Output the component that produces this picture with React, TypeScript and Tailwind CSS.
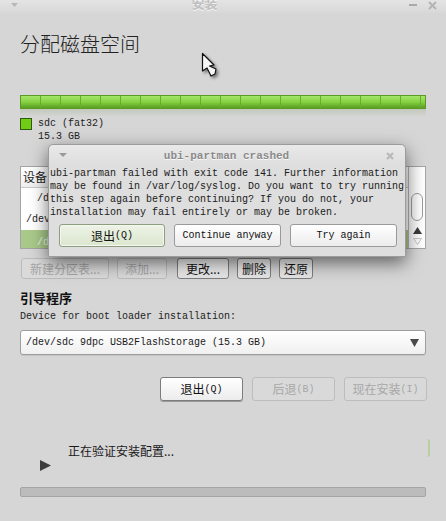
import React from "react";

const segs = Array.from({ length: 21 });

function Zh({ children, className = "" }: { children: React.ReactNode; className?: string }) {
  return <span className={"font-['Noto_Sans_CJK_SC',sans-serif] text-[12px] " + className}>{children}</span>;
}

export default function App() {
  return (
    <div className="relative w-[446px] h-[521px] overflow-hidden bg-[#d6d6d6] font-['Liberation_Mono','Noto_Sans_CJK_SC',monospace] text-[#1c1c1c]">
      {/* title bar */}
      <div className="flex h-[13px] items-start overflow-hidden bg-gradient-to-b from-[#e4e4e4] to-[#d8d8d8]">
        <svg width="7" height="4" viewBox="0 0 7 4" className="ml-[11px] mt-[3px]">
          <path d="M0 0 L7 0 L3.5 4 Z" fill="#b8b8b8" />
        </svg>
        <div className="flex-1 flex justify-center pr-[18px]">
          <span className="-mt-[5px] font-['Noto_Sans_CJK_SC',sans-serif] text-[13px] leading-[16px] font-bold text-[#c0c0c0] [text-shadow:0_1px_0_#f4f4f4]">安装</span>
        </div>
        <div className="flex items-start gap-[11px] mr-[9px] mt-[1px]">
          <div className="mt-[3px] w-[8px] h-[2px] bg-[#aaaaaa]" />
          <svg width="9" height="9" viewBox="0 0 9 9">
            <path d="M1 1 L8 8 M8 1 L1 8" stroke="#b4b4b4" strokeWidth="2" />
          </svg>
        </div>
      </div>

      {/* heading */}
      <div className="mt-[18px] px-[20px] font-['Noto_Sans_CJK_SC',sans-serif] text-[20px] leading-[26px] font-light text-[#222]">分配磁盘空间</div>

      {/* usage bar */}
      <div className="mt-[38px] mx-[20px] h-[14px] flex overflow-hidden border border-[#5c9a26] bg-gradient-to-b from-[#a6e66a] via-[#86d142] to-[#5a9f22]">
        {segs.map((_, i) => (
          <div key={i} className="w-[20px] shrink-0 h-full border-r border-[#6aac30]" />
        ))}
      </div>
      <div className="mx-[20px] h-[8px] bg-gradient-to-b from-[#c2c9bb] to-[#d6d6d6]" />

      {/* legend */}
      <div className="mt-[1px] px-[20px] flex gap-[6px]">
        <div className="w-[12px] h-[12px] border border-[#2f5a10] bg-[#70cc14]" />
        <div className="text-[10px] leading-[12px] text-[#222]">
          <div>sdc (fat32)</div>
          <div className="mt-[1px]">15.3 GB</div>
        </div>
      </div>

      {/* table */}
      <div className="mt-[23px] mx-[20px] h-[83px] flex border border-[#a4a4a4] bg-white overflow-hidden">
        <div className="flex-1 flex flex-col">
          <div className="h-[21px] shrink-0 flex items-center px-[2px] border-b border-[#c8c8c8] bg-gradient-to-b from-white to-[#efefef]">
            <Zh>设备</Zh>
          </div>
          <div className="h-[21px] shrink-0 flex items-center pl-[16px] text-[10px]"><span className="w-[12px] overflow-hidden whitespace-nowrap">/d</span></div>
          <div className="h-[21px] shrink-0 flex items-center pl-[5px] text-[10px]"><span className="w-[24px] overflow-hidden whitespace-nowrap">/dev</span></div>
          <div className="h-[21px] shrink-0 flex items-end pb-[1px] pl-[16px] text-[10px] text-[#eef6e6] bg-[#a9c98a]"><span className="w-[12px] overflow-hidden whitespace-nowrap">/d</span></div>
        </div>
        <div className="w-[17px] border-l border-[#b4b4b4] bg-gradient-to-r from-[#f4f4f4] to-white flex flex-col items-center">
          <div className="mt-[26px] w-[12px] h-[28px] rounded-[6px] border border-[#9a9a9a] bg-gradient-to-r from-[#f2f2f2] to-white" />
          <svg width="9" height="7" viewBox="0 0 9 7" className="mt-[6px]">
            <path d="M4.5 0 L9 7 L0 7 Z" fill="#3a3a3a" />
          </svg>
          <svg width="9" height="7" viewBox="0 0 9 7" className="mt-[4px]">
            <path d="M0.5 0.5 L8.5 0.5 L4.5 6.5 Z" fill="none" stroke="#c4c4c4" />
          </svg>
        </div>
      </div>

      {/* action row */}
      <div className="mt-[9px] pl-[21px] flex h-[21px]">
        <div className="w-[88px] flex items-center justify-center rounded-[3px] border border-[#bcbcbc] bg-[#dadada] text-[#a6a6a6]"><Zh>新建分区表...</Zh></div>
        <div className="ml-[8px] w-[50px] flex items-center justify-center rounded-[3px] border border-[#bcbcbc] bg-[#dadada] text-[#a6a6a6]"><Zh>添加...</Zh></div>
        <div className="ml-[10px] w-[52px] flex items-center justify-center rounded-[3px] border border-[#7e7e7e] bg-gradient-to-b from-[#f8f8f8] to-[#e4e4e4] text-[#111]"><Zh>更改...</Zh></div>
        <div className="ml-[8px] w-[34px] flex items-center justify-center rounded-[3px] border border-[#7e7e7e] bg-gradient-to-b from-[#f8f8f8] to-[#e4e4e4] text-[#111]"><Zh>删除</Zh></div>
        <div className="ml-[8px] w-[34px] flex items-center justify-center rounded-[3px] border border-[#7e7e7e] bg-gradient-to-b from-[#f8f8f8] to-[#e4e4e4] text-[#111]"><Zh>还原</Zh></div>
      </div>

      {/* boot loader */}
      <div className="mt-[10px] px-[20px] font-['Noto_Sans_CJK_SC',sans-serif] text-[13px] leading-[18px] font-bold text-[#111]">引导程序</div>
      <div className="mt-[3px] px-[20px] text-[10px] leading-[14px] text-[#222]">Device for boot loader installation:</div>
      <div className="mt-[6px] mx-[20px] h-[25px] flex items-center justify-between pl-[5px] pr-[6px] rounded-[3px] border border-[#9e9e9e] bg-gradient-to-b from-white to-[#f0f0f0] shadow-[0_1px_0_#c4c4c4]">
        <span className="text-[10px] text-[#1a1a1a]">/dev/sdc 9dpc USB2FlashStorage (15.3 GB)</span>
        <svg width="9" height="9" viewBox="0 0 9 9">
          <path d="M0 1 L9 1 L4.5 9 Z" fill="#4a4a4a" />
        </svg>
      </div>

      {/* nav buttons */}
      <div className="mt-[22px] pr-[19px] flex justify-end h-[24px]">
        <div className="w-[83px] flex items-center justify-center rounded-[3px] border border-[#7c7c7c] bg-gradient-to-b from-white to-[#ececec] shadow-[0_1px_0_#9a9a9a] text-[#111]">
          <Zh>退出</Zh><span className="text-[10px]">(Q)</span>
        </div>
        <div className="ml-[9px] w-[83px] flex items-center justify-center rounded-[3px] border border-[#bdbdbd] bg-[#d9d9d9] text-[#a8a8a8]">
          <Zh>后退</Zh><span className="text-[10px]">(B)</span>
        </div>
        <div className="ml-[9px] w-[83px] flex items-center justify-center rounded-[3px] border border-[#bdbdbd] bg-[#d9d9d9] text-[#a8a8a8]">
          <Zh>现在安装</Zh><span className="text-[10px]">(I)</span>
        </div>
      </div>

      {/* status */}
      <div className="mt-[38px] flex">
        <div className="flex-1">
          <div className="pl-[68px] mt-[4px] font-['Noto_Sans_CJK_SC',sans-serif] text-[12px] leading-[16px] text-[#1a1a1a]">正在验证安装配置...</div>
          <svg width="11" height="11" viewBox="0 0 11 11" className="ml-[40px] mt-[1px]">
            <path d="M0 0 L11 5.5 L0 11 Z" fill="#3c3c3c" />
          </svg>
        </div>
        <div className="mr-[16px] w-[3px] h-[18px] border-r-2 border-[#b8cfa0] rounded-r-full" />
      </div>
      <div className="mt-[16px] mx-[20px] h-[10px] rounded-[2px] border border-[#a4a4a4] bg-[#bcbcbc]" />

      {/* cursor */}
      <svg width="18" height="26" viewBox="0 0 18 26" className="absolute left-[201px] top-[52px] [filter:drop-shadow(2px_2px_1.5px_rgba(0,0,0,0.45))]">
        <path d="M1.5 1.5 L1.5 19 L6 16 L10 24 L14 22 L15 17 L8.5 14 L13 13 Z" fill="#f6f6f6" stroke="#111" strokeWidth="1.2" strokeLinejoin="round" />
      </svg>

      {/* dialog */}
      <div className="absolute left-[48px] top-[144px] w-[358px] h-[113px] flex flex-col rounded-t-[5px] border border-[#9c9c9c] bg-[#dedede] shadow-[0_6px_18px_rgba(0,0,0,0.55)]">
        <div className="h-[22px] shrink-0 flex items-center rounded-t-[5px] bg-gradient-to-b from-[#e9e9e9] to-[#dddddd]">
          <svg width="8" height="4" viewBox="0 0 8 4" className="ml-[10px] -mt-[2px]">
            <path d="M0 0 L8 0 L4 4 Z" fill="#9a9a9a" />
          </svg>
          <div className="flex-1 text-center text-[11px] font-bold text-[#8a8a8a] [text-shadow:0_1px_0_#fafafa]">ubi-partman crashed</div>
          <svg width="8" height="8" viewBox="0 0 8 8" className="mr-[11px] -mt-[1px]">
            <path d="M1 1 L7 7 M7 1 L1 7" stroke="#b8b8b8" strokeWidth="2" />
          </svg>
        </div>
        <div className="pl-[1px] text-[10px] leading-[13px] text-[#1a1a1a] whitespace-nowrap">
          <div>ubi-partman failed with exit code 141. Further information</div>
          <div>may be found in /var/log/syslog. Do you want to try running</div>
          <div>this step again before continuing? If you do not, your</div>
          <div>installation may fail entirely or may be broken.</div>
        </div>
        <div className="mt-[5px] pl-[10px] flex h-[23px]">
          <div className="w-[106px] flex items-center justify-center rounded-[3px] border border-[#8d9e7e] bg-gradient-to-b from-[#edf3e6] to-[#dbe6cf] shadow-[inset_0_0_0_1px_#f4f8ef] text-[#111]">
            <Zh>退出</Zh><span className="text-[10px]">(Q)</span>
          </div>
          <div className="ml-[9px] w-[107px] flex items-center justify-center rounded-[3px] border border-[#9a9a9a] bg-gradient-to-b from-white to-[#ececec] text-[10px] text-[#111]">Continue anyway</div>
          <div className="ml-[9px] w-[107px] flex items-center justify-center rounded-[3px] border border-[#9a9a9a] bg-gradient-to-b from-white to-[#ececec] text-[10px] text-[#111]">Try again</div>
        </div>
      </div>
    </div>
  );
}
